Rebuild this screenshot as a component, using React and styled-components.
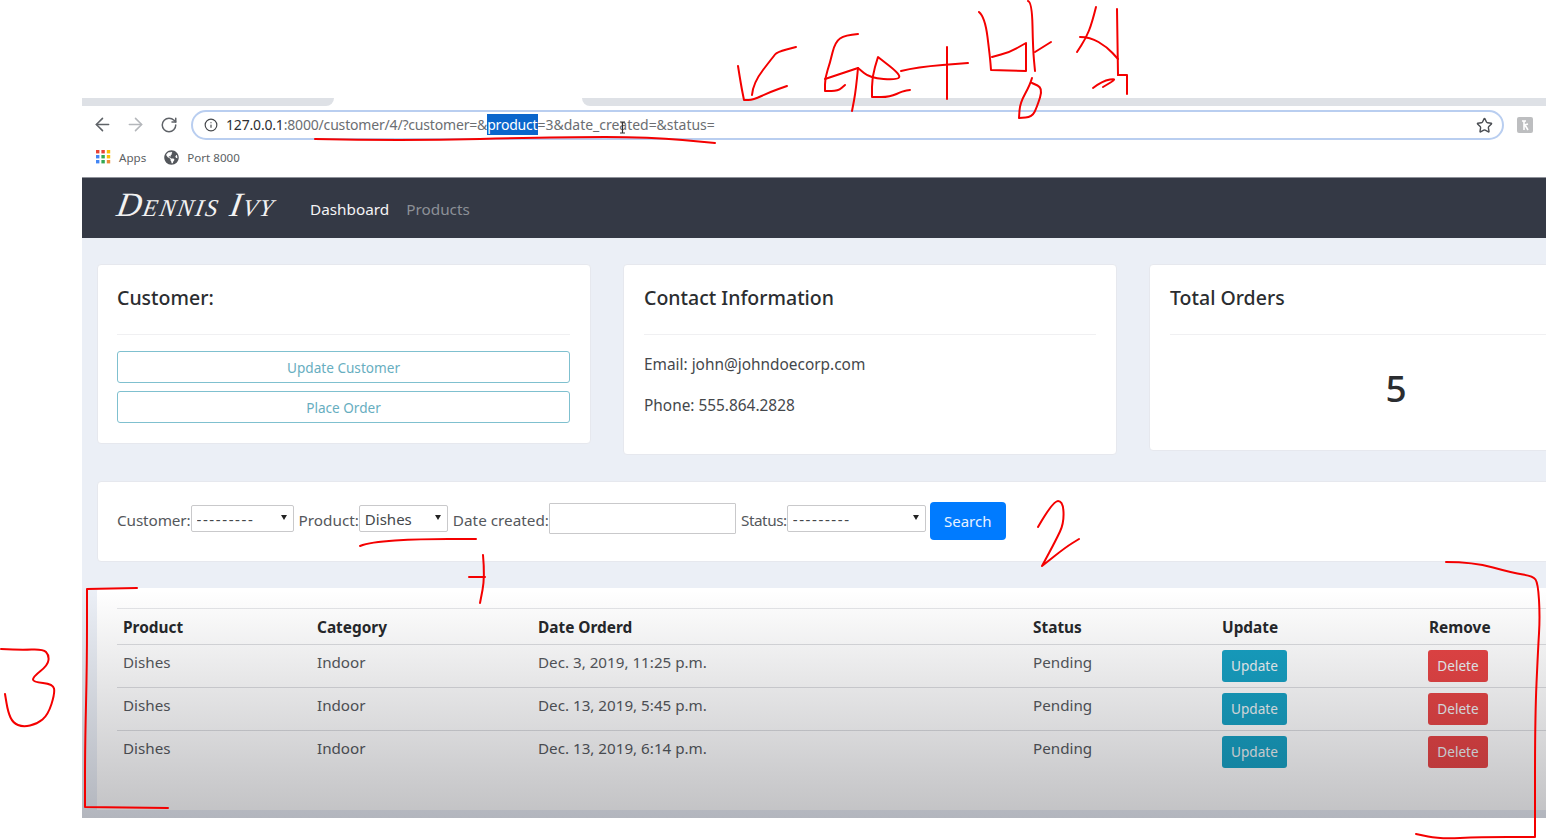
import React from 'react'
import styled, { createGlobalStyle } from 'styled-components'
import { ArrowLeft, ArrowRight, RotateCw, Info, Star } from 'lucide-react'
import { FaGlobeAmericas } from 'react-icons/fa'

const UI_FONT = '"Noto Sans", "Open Sans", sans-serif'

const GlobalStyle = createGlobalStyle`
  html, body {
    margin: 0;
    padding: 0;
    background: #fff;
    overflow: hidden;
  }
  * { box-sizing: border-box; }
`

const Page = styled.div`
  position: relative;
  width: 1546px;
  height: 840px;
  padding: 98px 0 0 82px;
  overflow: hidden;
  font-family: ${UI_FONT};
`

const Browser = styled.div`
  position: relative;
  width: 1464px;
  height: 720px;
  display: flex;
  flex-direction: column;
  overflow: hidden;
`

const TabStrip = styled.div`
  height: 8px;
  display: flex;
  justify-content: space-between;
  flex: none;
`

const TabGap = styled.div`
  height: 8px;
  background: #dee1e6;
  width: ${p => p.$width}px;
  border-radius: ${p => p.$radius};
`

const Toolbar = styled.div`
  height: 37px;
  flex: none;
  display: flex;
  align-items: center;
  padding-left: 13px;
  gap: 18px;
  color: #5f6368;
`

const NavIcon = styled.span`
  display: flex;
  justify-content: center;
  width: 15px;
  color: ${p => p.$off ? '#b4b7bb' : '#5f6368'};
  svg { flex: none; }
`

const AddressBar = styled.div`
  position: relative;
  width: 1313px;
  height: 30px;
  margin-left: -3px;
  border: 2px solid #b9cef0;
  border-radius: 15px;
  display: flex;
  align-items: center;
  padding-left: 11px;
  background: #fff;
`

const Url = styled.div`
  margin: -1px 0 0 8px;
  font-size: 14px;
  color: #6b6e72;
  white-space: nowrap;
  letter-spacing: -0.18px;
`

const Host = styled.span`
  color: #2d2f33;
`

const Selected = styled.span`
  background: #0a66cc;
  color: #fff;
  padding: 1px 0;
`

const UrlTail = styled.span`
  letter-spacing: -0.02px;
`

const Beam = styled.svg`
  position: absolute;
  left: 426px;
  top: 9px;
`

const StarBox = styled.span`
  position: absolute;
  right: 9px;
  top: 5px;
  display: flex;
  color: #4a4d52;
`

const Extension = styled.svg`
  margin-left: -5px;
  flex: none;
`

const Bookmarks = styled.div`
  height: 34px;
  flex: none;
  padding: 0 0 6px 14px;
  display: flex;
  align-items: center;
  font-size: 11.6px;
  color: #5c5f64;
`

const Bookmark = styled.span`
  display: flex;
  align-items: center;
  gap: ${p => p.$gap}px;
  margin-right: 18px;
`

const Navbar = styled.div`
  height: 61px;
  flex: none;
  background: #343945;
  border-top: 1px solid #8f929a;
  display: flex;
  align-items: center;
  padding-left: 35px;
`

const Logo = styled.div`
  width: 193px;
  font-family: "Liberation Serif", serif;
  font-style: italic;
  font-variant: small-caps;
  font-size: 34px;
  letter-spacing: 1.9px;
  color: #f2f2f2;
  white-space: nowrap;
  margin-top: -6px;
  text-indent: -3px;
  transform: skewX(-10deg);
  transform-origin: left bottom;
`

const NavLink = styled.span`
  font-size: 15.3px;
  margin: 2px 17px 0 0;
  color: ${p => p.$active ? '#f4f4f5' : '#8c9097'};
`

const Main = styled.div`
  flex: 1;
  position: relative;
  background: #ebeff6;
  padding: 26px 0 0 15px;
`

const CardRow = styled.div`
  display: grid;
  grid-template-columns: repeat(3, 494px);
  gap: 32px;
  align-items: start;
  margin-bottom: 26px;
`

const Card = styled.div`
  background: #fff;
  border-radius: 4px;
  border: 1px solid #e6e8ee;
  padding: 20px 20px 20px ${p => p.$left || 20}px;
  height: ${p => p.$height}px;
`

const CardTitle = styled.h5`
  margin: 0;
  height: 50px;
  line-height: 26px;
  font-size: 19.5px;
  font-weight: 500;
  color: #2b2d30;
  border-bottom: 1px solid #f0f0f2;
`

const OutlineButton = styled.div`
  height: 32px;
  margin-top: ${p => p.$top}px;
  border: 1.5px solid #7fc0cf;
  border-radius: 3px;
  display: flex;
  align-items: center;
  justify-content: center;
  font-size: 13.6px;
  color: #67aebf;
`

const InfoLine = styled.p`
  margin: ${p => p.$top}px 0 0;
  font-size: 15.4px;
  line-height: 22px;
  color: #44474b;
`

const BigNumber = styled.div`
  text-align: center;
  font-size: 37px;
  font-weight: 500;
  line-height: 44px;
  margin-top: 31px;
  color: #2b2d30;
`

const FilterCard = styled.form`
  width: 1482px;
  height: 81px;
  margin-bottom: 26px;
  background: #fff;
  border: 1px solid #e6e8ee;
  border-radius: 4px;
  padding: 0 19px 6px;
  display: flex;
  align-items: center;
  gap: 5px;
`

const Field = styled.label`
  display: flex;
  align-items: center;
  font-size: 15.3px;
  color: #55585c;
`

const FieldText = styled.span`
  padding-top: 3px;
  letter-spacing: ${p => p.$spacing || 0}px;
`

const SelectWrap = styled.span`
  position: relative;
  display: block;
  width: ${p => p.$width}px;
  height: 27px;
  &::after {
    content: '';
    position: absolute;
    right: 7px;
    top: 10px;
    border-left: 3px solid transparent;
    border-right: 3px solid transparent;
    border-top: 5px solid #222;
  }
`

const Select = styled.select`
  appearance: none;
  width: 100%;
  height: 100%;
  padding: 0 0 0 5px;
  background: #fff;
  border: 1px solid #c9c9cb;
  border-radius: 2px;
  font-family: ${UI_FONT};
  font-size: 15px;
  color: #44474b;
  letter-spacing: ${p => p.$dashes ? '1.6px' : '0'};
`

const DateInput = styled.input`
  width: 187px;
  height: 31px;
  background: #fff;
  border: 1px solid #c9c9cb;
  border-radius: 1px;
`

const SearchButton = styled.button`
  width: 76px;
  height: 38px;
  margin-left: -1px;
  margin-top: 5px;
  border: none;
  border-radius: 4px;
  background: #007bff;
  color: #e8f2ff;
  font-family: ${UI_FONT};
  font-size: 15px;
`

const TableCard = styled.div`
  width: 1482px;
  height: 222px;
  background: #fff;
  border-radius: 4px 4px 0 0;
  padding: 20px 20px 0;
`

const Table = styled.table`
  width: 1440px;
  table-layout: fixed;
  border-collapse: collapse;
`

const Th = styled.th`
  width: ${p => p.$width ? `${p.$width}px` : 'auto'};
  border-top: 1px solid #e4e5e8;
  padding: 7px 6px 4px;
  line-height: 24px;
  font-size: 15.4px;
  font-weight: 700;
  text-align: left;
  color: #26282b;
`

const Td = styled.td`
  border-top: 1px solid #dcdde0;
  padding: 5px 6px;
  height: 43px;
  line-height: 24px;
  font-size: 15.2px;
  vertical-align: top;
  color: #55585c;
`

const RowButton = styled.div`
  width: ${p => p.$width}px;
  height: 32px;
  margin-left: ${p => p.$shift || 0}px;
  border-radius: 3px;
  background: ${p => p.$color};
  color: #eef3f5;
  display: flex;
  align-items: center;
  justify-content: center;
  font-size: 13.6px;
`

const Fade = styled.div`
  position: absolute;
  left: 0;
  right: 0;
  bottom: 0;
  height: 228px;
  pointer-events: none;
  background: linear-gradient(rgba(10, 10, 20, 0), rgba(10, 10, 20, 0.25));
`

const Ink = styled.svg`
  position: absolute;
  left: 0;
  top: 0;
  pointer-events: none;
`

// a point listed twice stays a sharp corner in toPath
const strokes = [
  // arrow
  [[738, 66], [741, 85], [744, 100], [744, 100], [753, 100], [770, 92], [787, 86]],
  [[752, 95], [753, 83], [773, 57], [777, 52], [796, 47]],
  // Get
  [[858, 34], [845, 35], [835, 42], [830, 63], [825, 78], [825, 91], [825, 91], [838, 91], [845, 85]],
  [[825, 79], [858, 68], [858, 68], [870, 78], [897, 80], [901, 75], [878, 57], [878, 57], [872, 77], [872, 97], [872, 97], [890, 97], [903, 91], [910, 90]],
  [[858, 68], [856, 90], [852, 111]],
  [[901, 71], [917, 67], [968, 63]],
  [[947, 47], [947, 99]],
  // by
  [[979, 12], [985, 17], [990, 57], [991, 70], [991, 70], [1026, 71], [1026, 71], [1026, 43], [1026, 43], [1010, 52], [992, 57]],
  [[1028, 1], [1032, 2], [1033, 50], [1035, 71]],
  [[1035, 52], [1051, 42]],
  [[1032, 78], [1030, 85], [1020, 103], [1019, 118], [1019, 118], [1032, 117], [1037, 107], [1043, 88], [1032, 83]],
  // id
  [[1096, 7], [1092, 23], [1086, 38], [1077, 52]],
  [[1080, 37], [1090, 37], [1107, 47], [1118, 59]],
  [[1117, 9], [1118, 75]],
  [[1093, 88], [1102, 81], [1118, 78], [1103, 87]],
  [[1118, 75], [1127, 75], [1127, 75], [1127, 94]],
  // url underline
  [[315, 139], [400, 141], [560, 137], [650, 137], [715, 143]],
  // under dishes
  [[360, 546], [370, 542], [420, 539], [476, 539]],
  // the 7 looking thing
  [[483, 555], [485, 577], [480, 603]],
  [[469, 577], [485, 577]],
  // 2
  [[1038, 527], [1053, 501], [1063, 501], [1064, 523], [1056, 540], [1042, 566], [1042, 566], [1066, 547], [1079, 539]],
  // brackets
  [[1446, 562], [1473, 562], [1513, 573], [1533, 576], [1538, 583], [1540, 617], [1538, 650], [1535, 717], [1535, 837], [1535, 837], [1480, 837], [1440, 839], [1416, 834]],
  [[137, 588], [87, 589], [87, 589], [87, 663], [85, 747], [85, 807], [85, 807], [168, 808]],
  // 3
  [[1, 649], [20, 650], [43, 649], [49, 655], [48, 665], [33, 677], [33, 682], [53, 684], [55, 693], [48, 715], [37, 724], [23, 727], [13, 723], [8, 712], [5, 694]],
]

const toPath = pts => {
  let d = `M${pts[0][0]} ${pts[0][1]}`
  for (let i = 1; i < pts.length - 1; i++) {
    const mx = (pts[i][0] + pts[i + 1][0]) / 2
    const my = (pts[i][1] + pts[i + 1][1]) / 2
    d += ` Q${pts[i][0]} ${pts[i][1]} ${mx} ${my}`
  }
  const last = pts[pts.length - 1]
  return `${d} L${last[0]} ${last[1]}`
}

const appsColors = ['#e94335', '#e94335', '#fbbc05', '#4285f4', '#34a853', '#fbbc05', '#4285f4', '#34a853', '#ea8a35']

const AppsIcon = () => (
  <svg width="15" height="14" viewBox="0 0 15 14">
    {appsColors.map((c, i) => (
      <rect key={i} x={(i % 3) * 5.4} y={Math.floor(i / 3) * 5} width="3.4" height="3.4" fill={c} />
    ))}
  </svg>
)

const orders = [
  'Dec. 3, 2019, 11:25 p.m.',
  'Dec. 13, 2019, 5:45 p.m.',
  'Dec. 13, 2019, 6:14 p.m.',
]

export default function App() {
  return (
    <>
      <GlobalStyle />
      <Page>
        <Browser>
          <TabStrip>
            <TabGap $width={252} $radius="0 0 8px 0" />
            <TabGap $width={964} $radius="0 0 0 8px" />
          </TabStrip>
          <Toolbar>
            <NavIcon><ArrowLeft size={21} strokeWidth={1.8} /></NavIcon>
            <NavIcon $off><ArrowRight size={21} strokeWidth={1.8} /></NavIcon>
            <NavIcon><RotateCw size={18} strokeWidth={2} /></NavIcon>
            <AddressBar>
              <Info size={14} strokeWidth={2} color="#44474b" />
              <Url>
                <Host>127.0.0.1</Host>:8000/customer/4/?customer=&amp;<Selected>product</Selected><UrlTail>=3&amp;date_created=&amp;status=</UrlTail>
              </Url>
              <Beam width="7" height="13" viewBox="0 0 7 13">
                <path d="M1 1h5M3.500 1v11M1 12h5" stroke="#333" strokeWidth="1.200" fill="none" />
              </Beam>
              <StarBox><Star size={17} strokeWidth={2} /></StarBox>
            </AddressBar>
            <Extension width="16" height="16" viewBox="0 0 16 16">
              <rect width="16" height="16" rx="2" fill="#bdbec0" />
              <path d="M5 4h4M7 4v9M7 8l4-1M8 8l3 5" stroke="#fff" strokeWidth="1.600" fill="none" />
            </Extension>
          </Toolbar>
          <Bookmarks>
            <Bookmark $gap={8}><AppsIcon />Apps</Bookmark>
            <Bookmark $gap={8}><FaGlobeAmericas size={15} color="#53565b" />Port 8000</Bookmark>
          </Bookmarks>
          <Navbar>
            <Logo>Dennis Ivy</Logo>
            <NavLink $active>Dashboard</NavLink>
            <NavLink>Products</NavLink>
          </Navbar>
          <Main>
            <CardRow>
              <Card $height={180} $left={19}>
                <CardTitle>Customer:</CardTitle>
                <OutlineButton $top={16}>Update Customer</OutlineButton>
                <OutlineButton $top={8}>Place Order</OutlineButton>
              </Card>
              <Card $height={191}>
                <CardTitle>Contact Information</CardTitle>
                <InfoLine $top={19}>Email: john@johndoecorp.com</InfoLine>
                <InfoLine $top={19}>Phone: 555.864.2828</InfoLine>
              </Card>
              <Card $height={187}>
                <CardTitle>Total Orders</CardTitle>
                <BigNumber>5</BigNumber>
              </Card>
            </CardRow>
            <FilterCard>
              <Field><FieldText $spacing={-0.12}>Customer:</FieldText>
                <SelectWrap $width={103}><Select $dashes defaultValue=""><option value="">---------</option></Select></SelectWrap>
              </Field>
              <Field><FieldText>Product:</FieldText>
                <SelectWrap $width={89}><Select defaultValue="3"><option value="3">Dishes</option></Select></SelectWrap>
              </Field>
              <Field><FieldText>Date created:</FieldText>
                <DateInput type="text" />
              </Field>
              <Field><FieldText $spacing={-0.45}>Status:</FieldText>
                <SelectWrap $width={139}><Select $dashes defaultValue=""><option value="">---------</option></Select></SelectWrap>
              </Field>
              <SearchButton type="button">Search</SearchButton>
            </FilterCard>
            <TableCard>
              <Table>
                <thead>
                  <tr>
                    <Th $width={194}>Product</Th>
                    <Th $width={221}>Category</Th>
                    <Th $width={495}>Date Orderd</Th>
                    <Th $width={189}>Status</Th>
                    <Th $width={207}>Update</Th>
                    <Th>Remove</Th>
                  </tr>
                </thead>
                <tbody>
                  {orders.map(date => (
                    <tr key={date}>
                      <Td>Dishes</Td>
                      <Td>Indoor</Td>
                      <Td>{date}</Td>
                      <Td>Pending</Td>
                      <Td><RowButton $width={65} $color="#17a2c4">Update</RowButton></Td>
                      <Td><RowButton $width={60} $shift={-1} $color="#e84545">Delete</RowButton></Td>
                    </tr>
                  ))}
                </tbody>
              </Table>
            </TableCard>
            <Fade />
          </Main>
        </Browser>
        <Ink width="1546" height="840" viewBox="0 0 1546 840" fill="none" stroke="#f40000" strokeWidth="2" strokeLinecap="round" strokeLinejoin="round">
          {strokes.map((pts, i) => <path key={i} d={toPath(pts)} />)}
        </Ink>
      </Page>
    </>
  )
}
